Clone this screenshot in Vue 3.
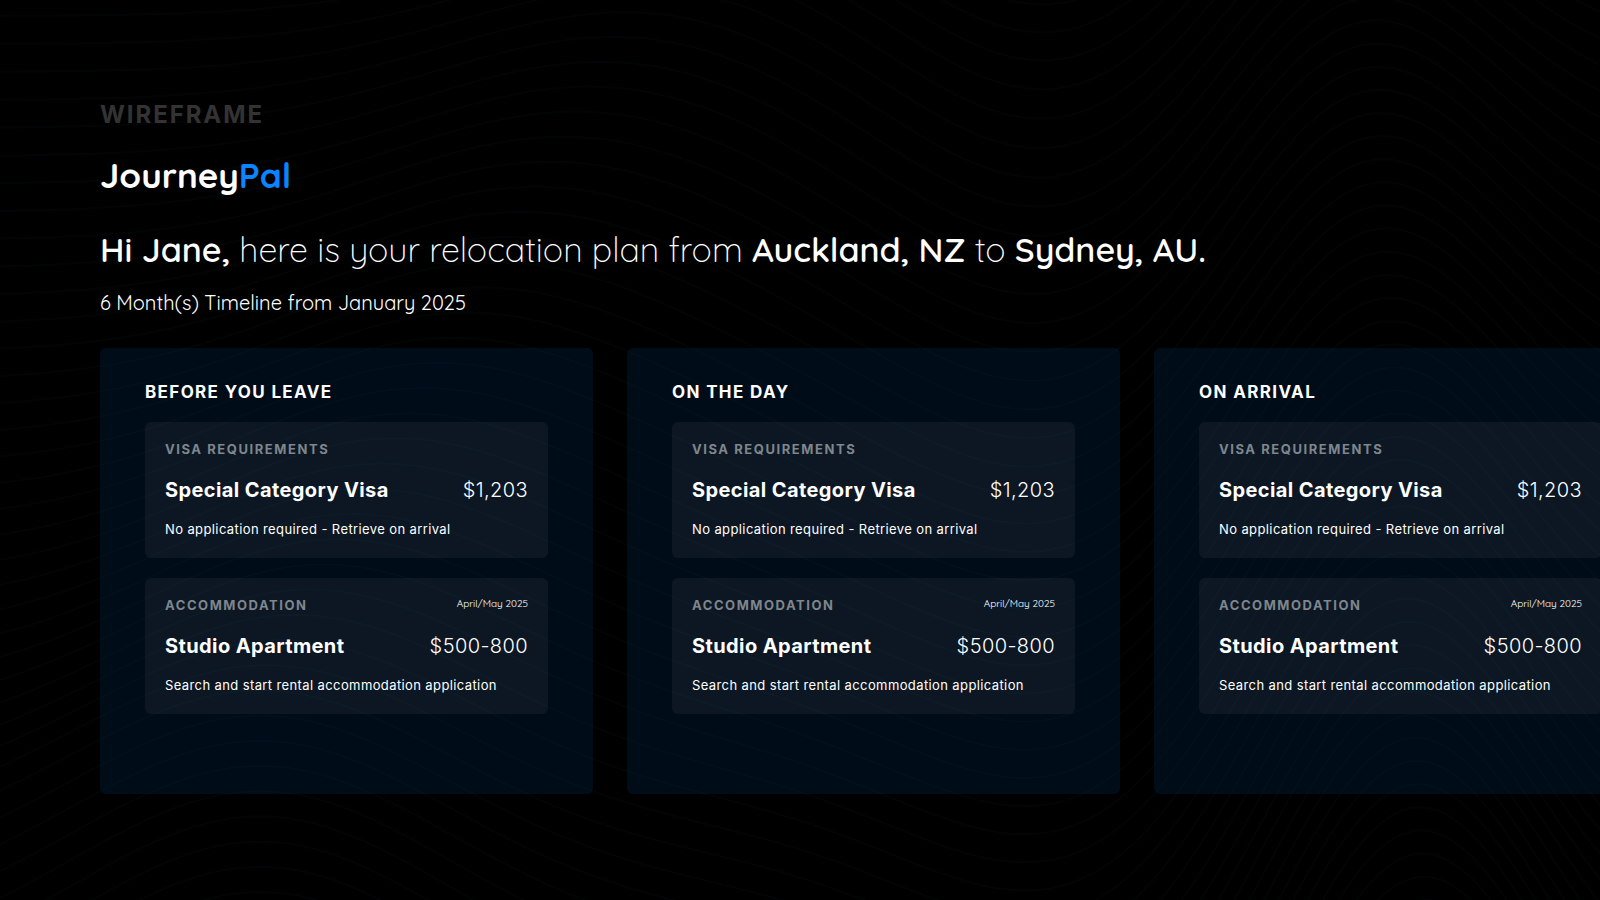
<script setup>
const stages = ['Before you leave', 'On the day', 'On arrival']

const items = [
  {
    category: 'Visa requirements',
    title: 'Special Category Visa',
    price: '$1,203',
    note: 'No application required - Retrieve on arrival',
  },
  {
    category: 'Accommodation',
    date: 'April/May 2025',
    title: 'Studio Apartment',
    price: '$500-800',
    note: 'Search and start rental accommodation application',
  },
]

// Contour lines: each one is a smooth curve offset downwards from the last.
const bump = (x, centre, width) => Math.exp(-(((x - centre) / width) ** 2))

const contours = Array.from({ length: 56 }, (_, i) => {
  const base = -180 + i * 28
  const depth = Math.max(0, base / 900)
  const points = []
  for (let x = -20; x <= 1620; x += 10) {
    const y =
      base -
      (80 + 90 * depth) * bump(x, Math.max(260, 690 - 460 * depth), 270) +
      100 * bump(x, 1060, 220) -
      (170 + 150 * depth) * bump(x, 1350 + 50 * depth, 190)
    points.push(`${x} ${Math.round(y * 10) / 10}`)
  }
  return `M${points.join('L')}`
})
</script>

<template>
  <div class="page">
    <svg class="contours" viewBox="0 0 1600 900" preserveAspectRatio="xMidYMid slice" aria-hidden="true">
      <path v-for="(d, i) in contours" :key="i" :d="d" />
    </svg>

    <header class="intro">
      <p class="kind">Wireframe</p>
      <p class="logo">Journey<span>Pal</span></p>
      <h1 class="headline">
        <strong>Hi Jane,</strong> here is your relocation plan from
        <strong>Auckland, NZ</strong> to <strong>Sydney, AU.</strong>
      </h1>
      <p class="timeline">6 Month(s) Timeline from January 2025</p>
    </header>

    <main class="board">
      <section v-for="stage in stages" :key="stage" class="stage">
        <h2>{{ stage }}</h2>
        <article v-for="item in items" :key="item.title" class="card">
          <div class="row">
            <h3>{{ item.category }}</h3>
            <time v-if="item.date">{{ item.date }}</time>
          </div>
          <div class="row main">
            <h4>{{ item.title }}</h4>
            <span class="price">{{ item.price }}</span>
          </div>
          <p class="note">{{ item.note }}</p>
        </article>
      </section>
    </main>
  </div>
</template>

<style>
body {
  margin: 0;
  background: #000;
}
</style>

<style scoped>
.page {
  position: relative;
  box-sizing: border-box;
  min-height: 100vh;
  padding: 100px 0 100px 100px;
  overflow: hidden;
  background: #000;
  color: #fff;
  font-family: Inter, 'Liberation Sans', sans-serif;
}

h1,
h2,
h3,
h4,
p {
  margin: 0;
}

.contours {
  position: absolute;
  inset: 0;
  width: 100%;
  height: 100%;
  fill: none;
  stroke: #3f788c;
  stroke-opacity: 0.04;
  stroke-width: 2;
}

.intro,
.board {
  position: relative;
}

.kind {
  color: #333;
  font-size: 24px;
  font-weight: 700;
  line-height: 30px;
  letter-spacing: 0.08em;
  text-transform: uppercase;
}

.logo,
.headline,
.timeline,
time {
  font-family: Quicksand, Lato, sans-serif;
}

.logo {
  margin-top: 22px;
  font-size: 35px;
  font-weight: 700;
  line-height: 46px;
}

.logo span {
  color: #0a84ff;
}

.headline {
  margin-top: 30px;
  font-size: 34px;
  font-weight: 300;
  line-height: 44px;
}

.headline strong {
  font-weight: 600;
}

.timeline {
  margin-top: 20px;
  font-size: 20px;
  font-weight: 400;
  line-height: 22px;
}

.board {
  display: flex;
  gap: 34px;
  margin-top: 34px;
}

.stage {
  flex: 0 0 auto;
  box-sizing: border-box;
  width: min(493px, 85vw);
  min-height: 446px;
  padding: 32px 45px 80px;
  border-radius: 6px;
  background: rgba(0, 60, 120, 0.2);
}

.stage h2 {
  margin-bottom: 18px;
  font-size: 17px;
  font-weight: 700;
  line-height: 24px;
  letter-spacing: 0.08em;
  text-transform: uppercase;
}

.card {
  padding: 18px 20px 20px;
  border-radius: 6px;
  background: rgba(235, 235, 255, 0.05);
}

.card + .card {
  margin-top: 20px;
}

.row {
  display: flex;
  justify-content: space-between;
  align-items: flex-start;
}

.card h3 {
  color: #7f868d;
  font-size: 13px;
  font-weight: 700;
  line-height: 18px;
  letter-spacing: 0.12em;
  text-transform: uppercase;
}

time {
  font-size: 10px;
  line-height: 16px;
}

.main {
  margin-top: 18px;
  font-size: 20px;
  line-height: 28px;
  letter-spacing: 0.02em;
}

.card h4 {
  font-size: 20px;
  font-weight: 700;
}

.price {
  font-weight: 300;
}

.note {
  margin-top: 16px;
  font-size: 13px;
  line-height: 18px;
  letter-spacing: 0.03em;
}
</style>
